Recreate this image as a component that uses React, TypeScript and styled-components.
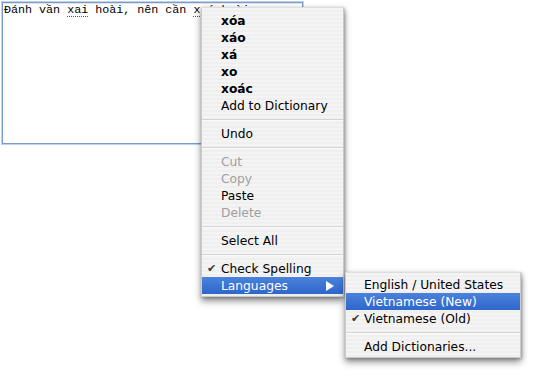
import React from "react";
import styled, { createGlobalStyle } from "styled-components";

const Global = createGlobalStyle`
  html, body { margin: 0; padding: 0; background: #ffffff; }
  body { width: 533px; height: 380px; overflow: hidden; }
`;

const Page = styled.div`
  position: relative;
  width: 533px;
  height: 380px;
  padding: 2px 0 0 2px;
  box-sizing: border-box;
  display: flex;
  align-items: flex-start;
`;

const TextBox = styled.div`
  width: 298px;
  height: 140px;
  border: 1px solid #7a9bcc;
  box-shadow: 0 0 0 1px rgba(150, 185, 230, 0.65), inset 0 1px 1px rgba(0,0,0,0.12);
  background: #ffffff;
  font-family: "Liberation Mono", "DejaVu Sans Mono", monospace;
  font-size: 11.7px;
  line-height: 14px;
  color: #000;
  padding: 0 0 0 1px;
  white-space: pre;
`;

const Misspelled = styled.span`
  text-decoration-line: underline;
  text-decoration-style: dotted;
  text-decoration-color: #e02020;
  text-decoration-thickness: 1px;
  text-underline-offset: 3px;
`;

const Menu = styled.div<{ $left: number; $top: number; $width: number; $padTop: number }>`
  position: absolute;
  left: ${(p) => p.$left}px;
  top: ${(p) => p.$top}px;
  width: ${(p) => p.$width}px;
  padding: ${(p) => p.$padTop}px 0 2px;
  display: flex;
  flex-direction: column;
  background: repeating-linear-gradient(
    to bottom,
    #f4f4f4 0px,
    #f4f4f4 2px,
    #efefef 2px,
    #efefef 4px
  );
  border: 1px solid #cacaca;
  border-top-color: #dedede;
  box-sizing: border-box;
  box-shadow: 0 4px 7px rgba(0, 0, 0, 0.45), 1px 1px 3px rgba(0, 0, 0, 0.25);
  font-family: "Lucida Grande", "DejaVu Sans", sans-serif;
  font-size: 12.25px;
`;

const Item = styled.div<{ $bold?: boolean; $disabled?: boolean; $active?: boolean }>`
  display: flex;
  align-items: center;
  height: 17px;
  padding: 0 9px 0 5px;
  font-weight: ${(p) => (p.$bold ? 700 : 400)};
  color: ${(p) => (p.$active ? "#ffffff" : p.$disabled ? "#a0a0a0" : "#000000")};
  background: ${(p) => (p.$active ? "linear-gradient(#4a82dc, #2f66cc)" : "transparent")};
  white-space: nowrap;
`;

const CheckSlot = styled.span<{ $w: number; $active?: boolean }>`
  width: ${(p) => p.$w}px;
  flex: none;
  font-size: 11px;
  font-weight: 400;
  color: ${(p) => (p.$active ? "#fff" : "#3a3a3a")};
`;

const Arrow = styled.span`
  margin-left: auto;
  width: 0;
  height: 0;
  border-top: 5px solid transparent;
  border-bottom: 5px solid transparent;
  border-left: 8px solid #ffffff;
`;

const Separator = styled.div`
  height: 11px;
  display: flex;
  align-items: center;
  &::after {
    content: "";
    flex: 1;
    height: 1px;
    background: #d4d4d4;
    box-shadow: 0 1px 0 #fafafa;
  }
`;

type Entry =
  | { kind: "sep" }
  | { kind: "item"; label: string; bold?: boolean; disabled?: boolean; active?: boolean; checked?: boolean; sub?: boolean };

const mainItems: Entry[] = [
  { kind: "item", label: "xóa", bold: true },
  { kind: "item", label: "xáo", bold: true },
  { kind: "item", label: "xá", bold: true },
  { kind: "item", label: "xo", bold: true },
  { kind: "item", label: "xoác", bold: true },
  { kind: "item", label: "Add to Dictionary" },
  { kind: "sep" },
  { kind: "item", label: "Undo" },
  { kind: "sep" },
  { kind: "item", label: "Cut", disabled: true },
  { kind: "item", label: "Copy", disabled: true },
  { kind: "item", label: "Paste" },
  { kind: "item", label: "Delete", disabled: true },
  { kind: "sep" },
  { kind: "item", label: "Select All" },
  { kind: "sep" },
  { kind: "item", label: "Check Spelling", checked: true },
  { kind: "item", label: "Languages", active: true, sub: true },
];

const subItems: Entry[] = [
  { kind: "item", label: "English / United States" },
  { kind: "item", label: "Vietnamese (New)", active: true },
  { kind: "item", label: "Vietnamese (Old)", checked: true },
  { kind: "sep" },
  { kind: "item", label: "Add Dictionaries..." },
];

function renderEntries(entries: Entry[], slot: number) {
  return entries.map((e, i) =>
    e.kind === "sep" ? (
      <Separator key={i} />
    ) : (
      <Item key={i} $bold={e.bold} $disabled={e.disabled} $active={e.active}>
        <CheckSlot $w={slot} $active={e.active}>{e.checked ? "✔" : ""}</CheckSlot>
        {e.label}
        {e.sub && <Arrow />}
      </Item>
    )
  );
}

export default function App() {
  return (
    <>
      <Global />
      <Page>
        <TextBox>
          {"Đánh vần "}
          <Misspelled>xai</Misspelled>
          {" hoài, nên cần "}
          <Misspelled>xoá</Misspelled>
          {" hoài"}
        </TextBox>
        <Menu $left={201} $top={7} $width={143} $padTop={4}>
          {renderEntries(mainItems, 14)}
        </Menu>
        <Menu $left={345} $top={272} $width={176} $padTop={3}>
          {renderEntries(subItems, 13)}
        </Menu>
      </Page>
    </>
  );
}
